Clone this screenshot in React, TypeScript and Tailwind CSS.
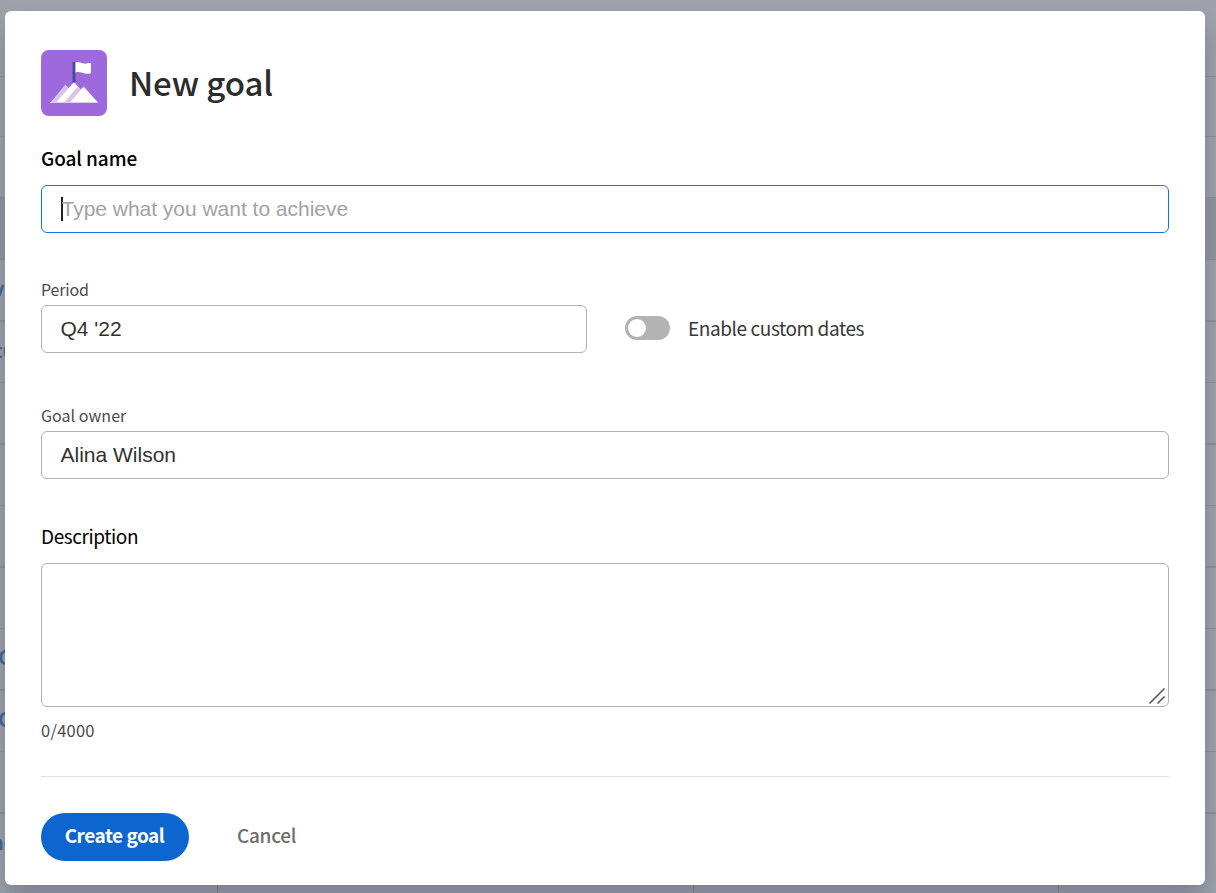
import React from "react";

const label = "font-['Noto_Sans_CJK_SC','Open_Sans',sans-serif]";

const rows = [
  { cls: "h-[61px] border-t", text: "ve", shift: "-ml-[7px]" },
  { cls: "h-[62px] border-t-2", text: "tu", shift: "-ml-[6px]" },
  { cls: "h-[61px] border-t", text: "", shift: "" },
  { cls: "h-[62px] border-t-2", text: "", shift: "" },
  { cls: "h-[61px] border-t", text: "", shift: "" },
  { cls: "h-[62px] border-t-2", text: "", shift: "" },
  { cls: "h-[61px] border-t", text: "C", shift: "-ml-[2px]" },
  { cls: "h-[62px] border-t-2", text: "C", shift: "-ml-[2px]" },
  { cls: "h-[61px] border-t", text: "", shift: "" },
  { cls: "h-[81px] pb-[20px] border-t-2", text: "ne", shift: "-ml-[9px]" },
];

function Backdrop() {
  return (
    <div className="flex h-full flex-col bg-[#a0a3ac]">
      <div className="h-[76px] shrink-0" />
      <div className="h-[60px] shrink-0 border-t border-[#8e9198]" />
      <div className="h-[61px] shrink-0 border-t border-[#8e9198]" />
      <div className="h-[62px] shrink-0 border-t border-[#8b8e96] bg-[#93969e]" />
      {rows.map((row, i) => (
        <div key={i} className={`flex shrink-0 items-center overflow-hidden border-[#8e9198] ${row.cls}`}>
          <div className={`h-[24px] w-[217px] shrink-0 text-[20px] font-bold leading-[20px] text-[#3e5f91] ${label}`}>
            <span className={`inline-block ${row.shift}`}>{row.text}</span>
          </div>
          {i === rows.length - 1 && (
            <div className="-mb-[20px] flex h-[81px] w-full">
              <div className="w-px bg-[#7f838b]" />
              <div className="w-[476px] border-r border-[#7f838b]" />
              <div className="w-[365px] border-r border-[#7f838b]" />
            </div>
          )}
        </div>
      ))}
    </div>
  );
}

function GoalIcon() {
  return (
    <svg width="66" height="66" viewBox="0 0 66 66" className="shrink-0">
      <rect width="66" height="66" rx="8" fill="#9d69dd" />
      <path d="M9 53 24.500 34.500 29 39.500 33 53Z" fill="#d8c4e6" />
      <path d="M15 52.500 33 32 51 52.500Z" fill="#fff" />
      <path d="M23 52.500 36.500 37 40 39.500 42 52.500Z" fill="#d8c4e6" />
      <path d="M29 52.500 42.500 36.500 57 52.500Z" fill="#fff" />
      <rect x="9" y="52" width="48" height="1" fill="#dccbe9" />
      <rect x="31.500" y="12" width="3" height="20.500" fill="#4b4b94" />
      <path d="M34.500 12.400C38 11.400 40 13.400 43 13.600c2.500.2 4.500-.8 7-.6v10.200c-3 .8-5 .8-8-.2-2.500-.8-5-1.400-7.500-.6Z" fill="#fff" />
    </svg>
  );
}

export default function App() {
  return (
    <div className="relative h-[893px] w-[1216px] overflow-hidden">
      <Backdrop />
      <div className="absolute left-[5px] top-[11px] flex h-[874px] w-[1200px] flex-col rounded-[6px] bg-white px-9 pt-[39px] shadow-[0_14px_26px_rgba(88,100,116,0.55)]">
        <div className="flex h-[66px] items-center gap-[22px]">
          <GoalIcon />
          <h1 className={`${label} pb-[2px] text-[33px] font-medium leading-[48px] tracking-[-0.1px] text-[#2c2c2c]`}>New goal</h1>
        </div>

        <label className={`${label} mt-[28px] h-[29px] whitespace-nowrap text-[19px] font-medium leading-[28px] tracking-[-0.1px] text-black`}>
          <span>Goal name</span>
        </label>
        <div className="mt-[12px] flex h-[48px] shrink-0 items-center rounded-[6px] border border-[#1473e6] pl-[19px]">
          <span className="h-[24px] w-[2px] bg-[#222]" />
          <span className="-ml-[1.5px] font-['Liberation_Sans',sans-serif] text-[21px] leading-[28px] tracking-[-0.02px] text-[#9fa2a9]">Type what you want to achieve</span>
        </div>

        <div className="mt-[44px] flex">
          <div className="w-[546px]">
            <div className={`${label} h-[28px] text-[16px] leading-[24px] tracking-[-0.15px] text-[#4b4b4b]`}>
              <span>Period</span>
            </div>
            <div className="flex h-[48px] items-center rounded-[6px] border border-[#b1b1b1] pl-[18.5px] font-['Liberation_Sans',sans-serif] text-[21px] text-[#323232]">Q4 '22</div>
          </div>
          <div className="ml-[38px] flex h-[48px] items-center self-end">
            <div className="mb-[2px] flex h-[24px] w-[45px] items-center rounded-full bg-[#b3b3b3] pl-[3px]">
              <div className="h-[18px] w-[18px] rounded-full bg-white" />
            </div>
            <span className={`${label} mb-[2px] ml-[18px] whitespace-nowrap text-[19px] leading-[28px] tracking-[-0.41px] text-[#383838]`}>Enable custom dates</span>
          </div>
        </div>

        <div className={`${label} mt-[50px] h-[28px] text-[16px] leading-[24px] tracking-[0.04px] text-[#4b4b4b]`}>
          <span>Goal owner</span>
        </div>
        <div className="flex h-[48px] items-center rounded-[6px] border border-[#b1b1b1] pl-[18.5px] font-['Liberation_Sans',sans-serif] text-[21px] text-[#323232]">Alina Wilson</div>

        <div className={`${label} mt-[43px] h-[29px] text-[19px] leading-[28px] tracking-[-0.42px] text-black`}>
          <span>Description</span>
        </div>
        <div className="mt-[12px] flex h-[144px] shrink-0 items-end justify-end rounded-[6px] border border-[#b1b1b1] pb-px pr-[2px]">
          <svg width="18" height="18" viewBox="0 0 18 18" fill="none" stroke="#505050" strokeWidth="1.5">
            <path d="M1.500 16.500 16.500 1.500M9.500 16.500l7-7" />
          </svg>
        </div>
        <div className={`${label} mt-[11px] h-[25px] text-[16.5px] leading-[24px] tracking-[0.25px] text-[#4b4b4b]`}>
          <span>0/4000</span>
        </div>

        <div className="mt-[33px] h-px shrink-0 bg-[#e1e1e1]" />
        <div className="mt-[36px] flex h-[48px] items-center">
          <button className={`${label} flex h-[48px] w-[148px] items-center justify-center rounded-full bg-[#0d66d0] pb-[3px] pr-px text-[19px] font-bold tracking-[-0.48px] text-white`}>
            <span>Create goal</span>
          </button>
          <button className={`${label} ml-[48px] pb-[3px] text-[19px] font-medium tracking-[-0.3px] text-[#6e6e6e]`}>
            <span>Cancel</span>
          </button>
        </div>
      </div>
    </div>
  );
}
